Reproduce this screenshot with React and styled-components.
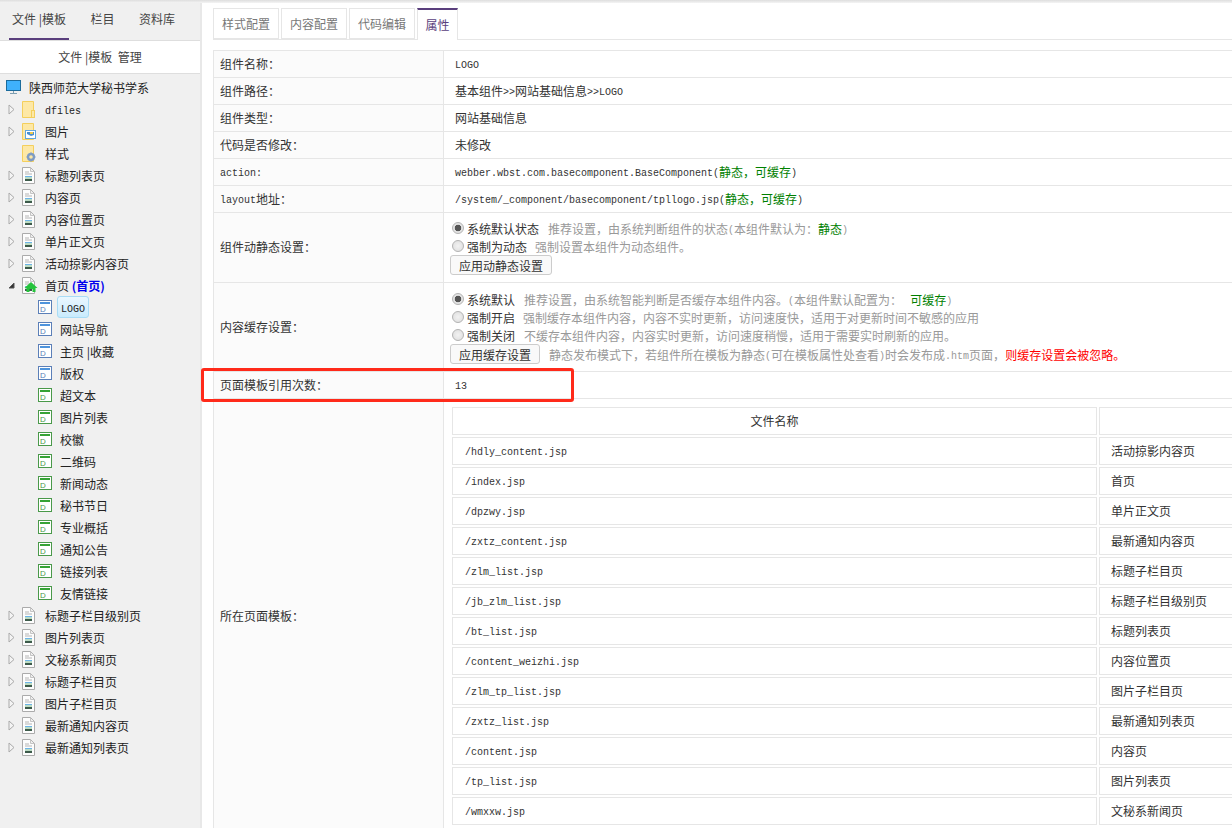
import React from "react";
import styled, { createGlobalStyle } from "styled-components";

const purple = "#5a3f7d";
const line = "#e6e6e6";

const Global = createGlobalStyle`
  html, body { margin: 0; padding: 0; height: 100%; overflow: hidden; background: #fff; }
  body {
    font-family: "Noto Sans CJK SC", "Liberation Sans", sans-serif;
    font-size: 12px;
    color: #333;
  }
  * { box-sizing: border-box; }
`;

const Page = styled.div`
  display: flex;
  flex-direction: column;
  width: 1232px;
  height: 828px;
  overflow: hidden;
`;

const TopShade = styled.div`
  flex: none;
  height: 3px;
  background: linear-gradient(#dedede, #f4f4f4);
`;

const Body = styled.div`
  position: relative;
  flex: 1;
  display: flex;
  min-height: 0;
`;

const Sidebar = styled.aside`
  flex: none;
  width: 202px;
  background: #f0f0f0;
  border-right: 2px solid #e8e8e8;
`;

const SideTabs = styled.div`
  display: flex;
  height: 37px;
  padding-left: 9px;
`;

const SideTab = styled.div`
  width: ${(p) => p.$w}px;
  height: 37px;
  padding-top: 7px;
  line-height: 18px;
  text-align: center;
  color: #444;
  border-bottom: ${(p) => (p.$active ? `2px solid ${purple}` : "none")};
`;

const SidePanel = styled.div`
  height: 34px;
  line-height: 32px;
  text-align: center;
  background: #fff;
  color: #444;
  border-top: 1px solid #dedede;
  border-bottom: 1px solid #dedede;
`;

const Tree = styled.div`
  padding-top: 2px;
`;

const TreeRow = styled.div`
  display: flex;
  align-items: center;
  height: 22px;
  padding-left: ${(p) => p.$indent}px;
  color: #222;
  white-space: nowrap;
`;

const TreeLabel = styled.span`
  margin-left: ${(p) => p.$gap ?? 9}px;
`;

const SelectedLabel = styled.span`
  margin-left: 5px;
  width: 32px;
  height: 22px;
  line-height: 22px;
  text-align: center;
  border: 1px solid #a9dcf6;
  border-radius: 3px;
  background: linear-gradient(#eaf7ff, #c9ebfd);
`;

const Mono = styled.span`
  font-family: "Liberation Mono", monospace;
  font-size: 10px;
  vertical-align: 1px;
`;

const HomeTag = styled.span`
  color: #0000ee;
  font-weight: 700;
`;

const Main = styled.main`
  flex: 1;
  min-width: 0;
  padding: 5px 0 0 11px;
  overflow: hidden;
`;

const Tabs = styled.div`
  display: flex;
  gap: 2px;
  height: 32px;
  border-bottom: 1px solid ${line};
`;

const Tab = styled.div`
  height: ${(p) => (p.$active ? 32 : 31)}px;
  padding: 0 ${(p) => (p.$active ? "7.5px" : "8px")};
  line-height: 29px;
  color: ${(p) => (p.$active ? purple : "#777")};
  background: #fff;
  border: 1px solid ${line};
  border-top: ${(p) => (p.$active ? `2px solid ${purple}` : `1px solid ${line}`)};
  border-bottom: ${(p) => (p.$active ? "none" : `1px solid ${line}`)};
`;

const PropTable = styled.table`
  width: 1100px;
  margin-top: 10px;
  table-layout: fixed;
  border-collapse: collapse;
`;

const Row = styled.tr`
  height: ${(p) => p.$h ?? 27}px;
`;

const Label = styled.td`
  width: 230px;
  padding: 0 0 2px 6px;
  background: #fbfbfb;
  border: 1px solid ${line};
`;

const Value = styled.td`
  padding: ${(p) => p.$pad ?? "0 0 2px 11px"};
  border: 1px solid ${line};
  white-space: nowrap;
`;

const Green = styled.span`
  color: #008000;
`;

const Red = styled.span`
  color: #f00;
`;

const OptionRow = styled.div`
  display: flex;
  align-items: center;
  height: ${(p) => p.$h ?? 18}px;
  padding-left: 2px;
`;

const Radio = styled.input.attrs({ type: "radio" })`
  appearance: none;
  flex: none;
  width: 12px;
  height: 12px;
  margin: 0 3px 0 0;
  border: 1px solid #b4b4b4;
  border-radius: 50%;
  background: radial-gradient(circle, #f2f2f2, #dcdcdc);
  &:checked {
    background: radial-gradient(circle, #555 0 3px, #e4e4e4 3.6px);
  }
`;

const Note = styled.span`
  margin-left: ${(p) => p.$gap ?? 9}px;
  color: #999;
`;

const ApplyButton = styled.button`
  height: 20px;
  margin-left: -2px;
  padding: 0 8px;
  font: inherit;
  color: #333;
  background: #f9f9f9;
  border: 1px solid #ccc;
  border-radius: 3px;
`;

const Highlight = styled.div`
  position: absolute;
  left: 201px;
  top: 365px;
  width: 373px;
  height: 34px;
  border: 3px solid #ff2a1a;
  border-radius: 3px;
  pointer-events: none;
`;

const FileTable = styled.table`
  width: 1000px;
  table-layout: fixed;
  border-collapse: separate;
  border-spacing: 2px;
`;

const FileCell = styled.td`
  height: 28px;
  padding: 0 0 0 12px;
  border: 1px solid ${line};
  color: #333;
`;

const NameCell = styled(FileCell)`
  padding-left: 11px;
`;

const FileHead = styled(FileCell)`
  padding: 0;
  text-align: center;
`;

function Arrow({ open }) {
  if (open) {
    return (
      <svg width="7" height="7" viewBox="0 0 7 7">
        <path d="M6 1V6H1Z" fill="#333" stroke="#555" />
      </svg>
    );
  }
  return (
    <svg width="7" height="11" viewBox="0 0 7 11">
      <path d="M1 1L6 5.5L1 10Z" fill="#f4f4f4" stroke="#aaa" />
    </svg>
  );
}

function Monitor() {
  return (
    <svg width="16" height="15" viewBox="0 0 16 15">
      <rect x="0.5" y="0.5" width="14" height="10" fill="#3fb1fb" stroke="#1b6b9c" />
      <path d="M7.5 11V13M4 13.5H11" stroke="#7f9fb2" />
    </svg>
  );
}

function Folder({ kind }) {
  return (
    <svg width="14" height="17" viewBox="0 0 14 17">
      <path d="M0.5 0.5H11.5V16.5H0.5Z" fill="#fde8a6" stroke="#f4cf5c" />
      {kind === "plain" && <rect x="9.5" y="9.5" width="3" height="7" fill="#fde8a6" stroke="#f4cf5c" />}
      {kind === "image" && (
        <>
          <rect x="3.5" y="7.5" width="10" height="8" fill="#fff" stroke="#62a6de" />
          <path d="M5 9H12V12L9 13L5 11Z" fill="#4a8fd0" />
          <path d="M8 9H11V11H8Z" fill="#f0c94a" />
        </>
      )}
      {kind === "gear" && (
        <>
          <circle cx="9" cy="12" r="3" fill="none" stroke="#7f9cc4" strokeWidth="2.4" />
          <path d="M9 7.6V9M9 15V16.4M4.6 12H6M12 12H13.4M5.9 8.9L6.9 9.9M11.1 14.1L12.1 15.1M12.1 8.9L11.1 9.9M6.9 14.1L5.9 15.1" stroke="#7f9cc4" strokeWidth="1.3" />
        </>
      )}
    </svg>
  );
}

function PageIcon({ home }) {
  return (
    <svg width="14" height="17" viewBox="0 0 14 17" overflow="visible">
      <path d="M0.5 0.5H8.5L12.5 4.5V16.5H0.5Z" fill="#fdfdfd" stroke="#ababab" />
      <path d="M8.5 1V4.5H12" fill="#eee" stroke="#c4c4c4" />
      <path d="M3 5H7M3 7H10" stroke="#b5b5b5" />
      <rect x="3" y="9" width="7" height="1" fill="#6db4e8" />
      <rect x="3" y="10" width="7" height="2" fill="#bcdcc4" />
      <rect x="3" y="12" width="7" height="2" fill="#3c5a4a" />
      {home && <path d="M9 5L15.5 11H13.5V15H10.5V12H7.5V15H4.5V11H2.5Z" fill="#25c33c" />}
    </svg>
  );
}

function ComponentIcon({ color, bar }) {
  return (
    <svg width="14" height="14" viewBox="0 0 14 14">
      <rect x="0.5" y="0.5" width="13" height="13" fill="#fff" stroke={color} />
      <rect x="2" y="2" width="10" height="2" fill={bar} />
      <text x="2" y="12" fontFamily="Liberation Sans" fontSize="8" fill={color}>D</text>
    </svg>
  );
}

const topNodes = [
  { label: "dfiles", mono: true, arrow: true, icon: <Folder kind="plain" /> },
  { label: "图片", arrow: true, icon: <Folder kind="image" /> },
  { label: "样式", icon: <Folder kind="gear" /> },
  { label: "标题列表页", arrow: true, icon: <PageIcon /> },
  { label: "内容页", arrow: true, icon: <PageIcon /> },
  { label: "内容位置页", arrow: true, icon: <PageIcon /> },
  { label: "单片正文页", arrow: true, icon: <PageIcon /> },
  { label: "活动掠影内容页", arrow: true, icon: <PageIcon /> },
];

const blueChildren = ["网站导航", "主页 |收藏", "版权"];
const greenChildren = ["超文本", "图片列表", "校徽", "二维码", "新闻动态", "秘书节日", "专业概括", "通知公告", "链接列表", "友情链接"];
const bottomNodes = ["标题子栏目级别页", "图片列表页", "文秘系新闻页", "标题子栏目页", "图片子栏目页", "最新通知内容页", "最新通知列表页"];

const files = [
  ["/hdly_content.jsp", "活动掠影内容页"],
  ["/index.jsp", "首页"],
  ["/dpzwy.jsp", "单片正文页"],
  ["/zxtz_content.jsp", "最新通知内容页"],
  ["/zlm_list.jsp", "标题子栏目页"],
  ["/jb_zlm_list.jsp", "标题子栏目级别页"],
  ["/bt_list.jsp", "标题列表页"],
  ["/content_weizhi.jsp", "内容位置页"],
  ["/zlm_tp_list.jsp", "图片子栏目页"],
  ["/zxtz_list.jsp", "最新通知列表页"],
  ["/content.jsp", "内容页"],
  ["/tp_list.jsp", "图片列表页"],
  ["/wmxxw.jsp", "文秘系新闻页"],
];

const ArrowSlot = styled.span`
  display: flex;
  align-items: center;
  flex: none;
  width: 14px;
`;

// top level tree row: arrow slot, then the icon and its label
function TopRow({ arrow, open, icon, children }) {
  return (
    <TreeRow $indent={8}>
      <ArrowSlot>{arrow && <Arrow open={open} />}</ArrowSlot>
      {icon}
      {children}
    </TreeRow>
  );
}

export default function App() {
  return (
    <Page>
      <Global />
      <TopShade />
      <Body>
        <Sidebar>
          <SideTabs>
            <SideTab $w={60} $active>文件 |模板</SideTab>
            <SideTab $w={67}>栏目</SideTab>
            <SideTab $w={42}>资料库</SideTab>
          </SideTabs>
          <SidePanel>文件 |模板&nbsp;&nbsp;管理</SidePanel>
          <Tree>
            <TreeRow $indent={6}>
              <Monitor />
              <TreeLabel $gap={7}>陕西师范大学秘书学系</TreeLabel>
            </TreeRow>
            {topNodes.map((n) => (
              <TopRow key={n.label} arrow={n.arrow} icon={n.icon}>
                <TreeLabel>{n.mono ? <Mono>{n.label}</Mono> : n.label}</TreeLabel>
              </TopRow>
            ))}
            <TopRow arrow open icon={<PageIcon home />}>
              <TreeLabel>首页 <HomeTag>(首页)</HomeTag></TreeLabel>
            </TopRow>
            <TreeRow $indent={38}>
              <ComponentIcon color="#5b7fb8" bar="#4f94dc" />
              <SelectedLabel><Mono>LOGO</Mono></SelectedLabel>
            </TreeRow>
            {blueChildren.map((c) => (
              <TreeRow key={c} $indent={38}>
                <ComponentIcon color="#5b7fb8" bar="#4f94dc" />
                <TreeLabel $gap={8}>{c}</TreeLabel>
              </TreeRow>
            ))}
            {greenChildren.map((c) => (
              <TreeRow key={c} $indent={38}>
                <ComponentIcon color="#4a994a" bar="#36a336" />
                <TreeLabel $gap={8}>{c}</TreeLabel>
              </TreeRow>
            ))}
            {bottomNodes.map((n) => (
              <TopRow key={n} arrow icon={<PageIcon />}>
                <TreeLabel>{n}</TreeLabel>
              </TopRow>
            ))}
          </Tree>
        </Sidebar>
        <Main>
          <Tabs>
            <Tab>样式配置</Tab>
            <Tab>内容配置</Tab>
            <Tab>代码编辑</Tab>
            <Tab $active>属性</Tab>
          </Tabs>
          <PropTable>
            <tbody>
              <Row>
                <Label>组件名称：</Label>
                <Value><Mono>LOGO</Mono></Value>
              </Row>
              <Row>
                <Label>组件路径：</Label>
                <Value>基本组件<Mono>&gt;&gt;</Mono>网站基础信息<Mono>&gt;&gt;LOGO</Mono></Value>
              </Row>
              <Row>
                <Label>组件类型：</Label>
                <Value>网站基础信息</Value>
              </Row>
              <Row>
                <Label>代码是否修改：</Label>
                <Value>未修改</Value>
              </Row>
              <Row>
                <Label><Mono>action:</Mono></Label>
                <Value>
                  <Mono>webber.wbst.com.basecomponent.BaseComponent(</Mono>
                  <Green>静态，可缓存</Green>
                  <Mono>)</Mono>
                </Value>
              </Row>
              <Row>
                <Label><Mono>layout</Mono>地址：</Label>
                <Value>
                  <Mono>/system/_component/basecomponent/tpllogo.jsp(</Mono>
                  <Green>静态，可缓存</Green>
                  <Mono>)</Mono>
                </Value>
              </Row>
              <Row $h={70}>
                <Label>组件动静态设置：</Label>
                <Value $pad="6px 0 7px 6px">
                  <OptionRow>
                    <Radio name="state" defaultChecked />系统默认状态
                    <Note>推荐设置，由系统判断组件的状态<Mono>(</Mono>本组件默认为：<Green>静态</Green><Mono>)</Mono></Note>
                  </OptionRow>
                  <OptionRow>
                    <Radio name="state" />强制为动态
                    <Note $gap={8}>强制设置本组件为动态组件。</Note>
                  </OptionRow>
                  <OptionRow $h={20}>
                    <ApplyButton>应用动静态设置</ApplyButton>
                  </OptionRow>
                </Value>
              </Row>
              <Row $h={89}>
                <Label>内容缓存设置：</Label>
                <Value $pad="7px 0 7px 6px">
                  <OptionRow>
                    <Radio name="cache" defaultChecked />系统默认
                    <Note>推荐设置，由系统智能判断是否缓存本组件内容。<Mono>(</Mono>本组件默认配置为：&nbsp;&nbsp;&nbsp;<Green>可缓存</Green><Mono>)</Mono></Note>
                  </OptionRow>
                  <OptionRow>
                    <Radio name="cache" />强制开启
                    <Note $gap={8}>强制缓存本组件内容，内容不实时更新，访问速度快，适用于对更新时间不敏感的应用</Note>
                  </OptionRow>
                  <OptionRow>
                    <Radio name="cache" />强制关闭
                    <Note>不缓存本组件内容，内容实时更新，访问速度稍慢，适用于需要实时刷新的应用。</Note>
                  </OptionRow>
                  <OptionRow $h={20}>
                    <ApplyButton>应用缓存设置</ApplyButton>
                    <Note>静态发布模式下，若组件所在模板为静态<Mono>(</Mono>可在模板属性处查看<Mono>)</Mono>时会发布成<Mono>.htm</Mono>页面，<Red>则缓存设置会被忽略。</Red></Note>
                  </OptionRow>
                </Value>
              </Row>
              <Row>
                <Label>页面模板引用次数：</Label>
                <Value><Mono>13</Mono></Value>
              </Row>
              <Row $h={436}>
                <Label>所在页面模板：</Label>
                <Value $pad="5px 0 7px 6px">
                  <FileTable>
                    <colgroup>
                      <col width="645" />
                      <col />
                    </colgroup>
                    <tbody>
                      <tr>
                        <FileHead>文件名称</FileHead>
                        <FileHead />
                      </tr>
                      {files.map(([path, name]) => (
                        <tr key={path}>
                          <FileCell><Mono>{path}</Mono></FileCell>
                          <NameCell>{name}</NameCell>
                        </tr>
                      ))}
                    </tbody>
                  </FileTable>
                </Value>
              </Row>
            </tbody>
          </PropTable>
        </Main>
        <Highlight />
      </Body>
    </Page>
  );
}
